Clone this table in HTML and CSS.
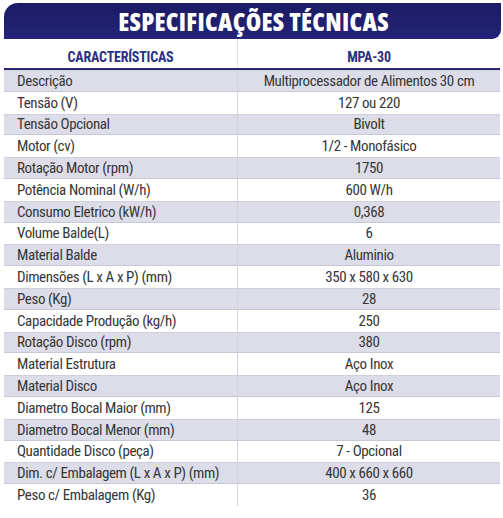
FILE: index.html
```html
<!DOCTYPE html>
<html lang="pt-BR">
<head>
<meta charset="utf-8">
<title>Especificações Técnicas</title>
<link rel="stylesheet" href="styles.css">
</head>
<body>
<div class="sheet">
  <div class="banner"><h1 class="banner-title">ESPECIFICAÇÕES TÉCNICAS</h1></div>
  <div class="specs">
    <div class="row head"><div class="cell label">CARACTERÍSTICAS</div><div class="cell value">MPA-30</div></div>
    <div class="row shade"><div class="cell label">Descrição</div><div class="cell value">Multiprocessador de Alimentos 30 cm</div></div>
    <div class="row"><div class="cell label">Tensão (V)</div><div class="cell value">127 ou 220</div></div>
    <div class="row shade"><div class="cell label">Tensão Opcional</div><div class="cell value">Bivolt</div></div>
    <div class="row"><div class="cell label">Motor (cv)</div><div class="cell value">1/2 - Monofásico</div></div>
    <div class="row shade"><div class="cell label">Rotação Motor (rpm)</div><div class="cell value">1750</div></div>
    <div class="row"><div class="cell label">Potência Nominal (W/h)</div><div class="cell value">600 W/h</div></div>
    <div class="row shade"><div class="cell label">Consumo Eletrico (kW/h)</div><div class="cell value">0,368</div></div>
    <div class="row"><div class="cell label">Volume Balde(L)</div><div class="cell value">6</div></div>
    <div class="row shade"><div class="cell label">Material Balde</div><div class="cell value">Aluminio</div></div>
    <div class="row"><div class="cell label">Dimensões (L x A x P) (mm)</div><div class="cell value">350 x 580 x 630</div></div>
    <div class="row shade"><div class="cell label">Peso (Kg)</div><div class="cell value">28</div></div>
    <div class="row"><div class="cell label">Capacidade Produção (kg/h)</div><div class="cell value">250</div></div>
    <div class="row shade"><div class="cell label">Rotação Disco (rpm)</div><div class="cell value">380</div></div>
    <div class="row"><div class="cell label">Material Estrutura</div><div class="cell value">Aço Inox</div></div>
    <div class="row shade"><div class="cell label">Material Disco</div><div class="cell value">Aço Inox</div></div>
    <div class="row"><div class="cell label">Diametro Bocal Maior (mm)</div><div class="cell value">125</div></div>
    <div class="row shade"><div class="cell label">Diametro Bocal Menor (mm)</div><div class="cell value">48</div></div>
    <div class="row"><div class="cell label">Quantidade Disco (peça)</div><div class="cell value">7 - Opcional</div></div>
    <div class="row shade"><div class="cell label">Dim. c/ Embalagem (L x A x P) (mm)</div><div class="cell value">400 x 660 x 660</div></div>
    <div class="row"><div class="cell label">Peso c/ Embalagem (Kg)</div><div class="cell value">36</div></div>
  </div>
</div>
</body>
</html>
```
FILE: styles.css
```css
html, body {
  margin: 0;
  padding: 0;
  background: #ffffff;
}
body {
  font-family: "Roboto Condensed", "Roboto", "Liberation Sans", sans-serif;
  font-stretch: 75%;
  color: #363638;
}
.sheet {
  padding: 3px 2px 0 4px;
}
.banner {
  height: 36px;
  border-radius: 14px 0 9px 0;
  background: linear-gradient(180deg, #1c1b66 0%, #20206f 60%, #24257a 100%);
  display: flex;
  align-items: center;
  justify-content: center;
}
.banner-title {
  margin: 0;
  font-family: "Open Sans", "Roboto Condensed", sans-serif;
  font-stretch: 75%;
  font-weight: 800;
  font-size: 25px;
  letter-spacing: 0.3px;
  color: #ffffff;
  line-height: 1;
  padding-left: 2px;
}
.specs {
  width: 496px;
}
.row {
  display: grid;
  grid-template-columns: 233px 1fr;
  height: 21.8px;
  font-size: 15px;
  font-weight: 400;
  letter-spacing: -0.4px;
}
.cell {
  display: flex;
  align-items: center;
  white-space: nowrap;
}
.label {
  padding-left: 13px;
}
.value {
  justify-content: center;
  border-left: 1px solid #d3d4dc;
}
.row.shade {
  background: #dcdde8;
  box-shadow: inset 0 1px 0 #cfd0dc, inset 0 -1px 0 #c8c9d6;
}
.row.head {
  height: 29px;
  border-bottom: 2px solid #2b2d70;
  box-sizing: content-box;
  font-size: 14px;
  font-weight: 700;
  color: #2c3083;
  letter-spacing: -0.2px;
}
.row.head .cell {
  padding-top: 6px;
}
.row.head .label {
  padding-left: 0;
  justify-content: center;
}
.row.head .value {
  border-left-color: #e4e5ea;
}
```
